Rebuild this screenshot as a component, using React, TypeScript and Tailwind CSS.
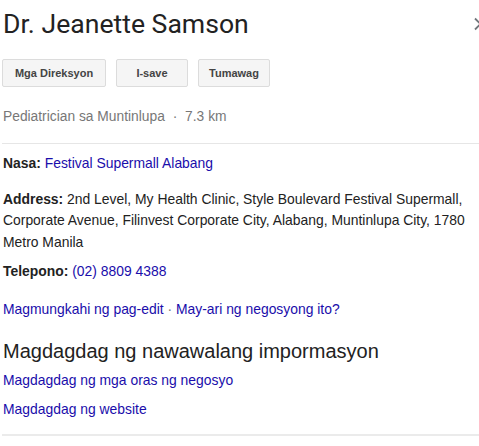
import React from 'react';

const buttons = [
  { label: 'Mga Direksyon', w: 'w-[104px]' },
  { label: 'I-save', w: 'w-[72px]' },
  { label: 'Tumawag', w: 'w-[72px]' },
];

const App: React.FC = () => {
  return (
    <div className="w-[479px] h-[446px] bg-white overflow-hidden font-['Liberation_Sans',Arial,sans-serif] text-[13.9px] text-[#222]">
      <div className="pl-[2px]">
        <div className="flex items-start justify-between h-[52px] pt-[4px]">
          <h1 className="font-['Roboto',sans-serif] text-[26.6px] leading-[40px] text-[#222] pl-[1px]">Dr. Jeanette Samson</h1>
          <svg width="10" height="14" viewBox="0 0 10 14" className="mt-[13px] mr-[-4px]">
            <path d="M2 1.5 L7.5 7 L2 12.5" fill="none" stroke="#70757a" strokeWidth="1.8" />
          </svg>
        </div>

        <div className="flex gap-[10px] pt-[7px]">
          {buttons.map((b) => (
            <button
              key={b.label}
              className={`${b.w} h-[28px] bg-[#f5f5f5] border border-[#dcdcdc] rounded-[2px] text-[11px] font-bold text-[#444]`}
            >
              {b.label}
            </button>
          ))}
        </div>

        <div className="pt-[21px] pl-[1px] text-[13.8px] text-[#777] leading-[18px]">
          Pediatrician sa Muntinlupa <span className="px-[4px]">·</span> 7.3 km
        </div>

        <div className="mt-[17px] border-t border-[#e6e6e6]" />

        <div className="pl-[1px] pt-[9px] leading-[21.5px]">
          <div>
            <span className="font-bold">Nasa:</span> <span className="text-[#1a0dab]">Festival Supermall Alabang</span>
          </div>
          <div className="pt-[14px] pr-[6px]">
            <span className="font-bold">Address:</span> 2nd Level, My Health Clinic, Style Boulevard Festival Supermall, Corporate Avenue, Filinvest Corporate City, Alabang, Muntinlupa City, 1780 Metro Manila
          </div>
          <div className="pt-[8px]">
            <span className="font-bold">Telepono:</span> <span className="text-[#1a0dab]">(02) 8809 4388</span>
          </div>
          <div className="pt-[16px] text-[#1a0dab]">
            Magmungkahi ng pag-edit <span className="text-[#777]">·</span> May-ari ng negosyong ito?
          </div>
          <div className="pt-[18px] text-[20px] leading-[26px] text-[#222]">Magdagdag ng nawawalang impormasyon</div>
          <div className="pt-[6px] text-[#1a0dab]">Magdagdag ng mga oras ng negosyo</div>
          <div className="pt-[7px] text-[#1a0dab]">Magdagdag ng website</div>
        </div>

        <div className="mt-[14px] border-t-2 border-[#ebebeb]" />
      </div>
    </div>
  );
};

export default App;
